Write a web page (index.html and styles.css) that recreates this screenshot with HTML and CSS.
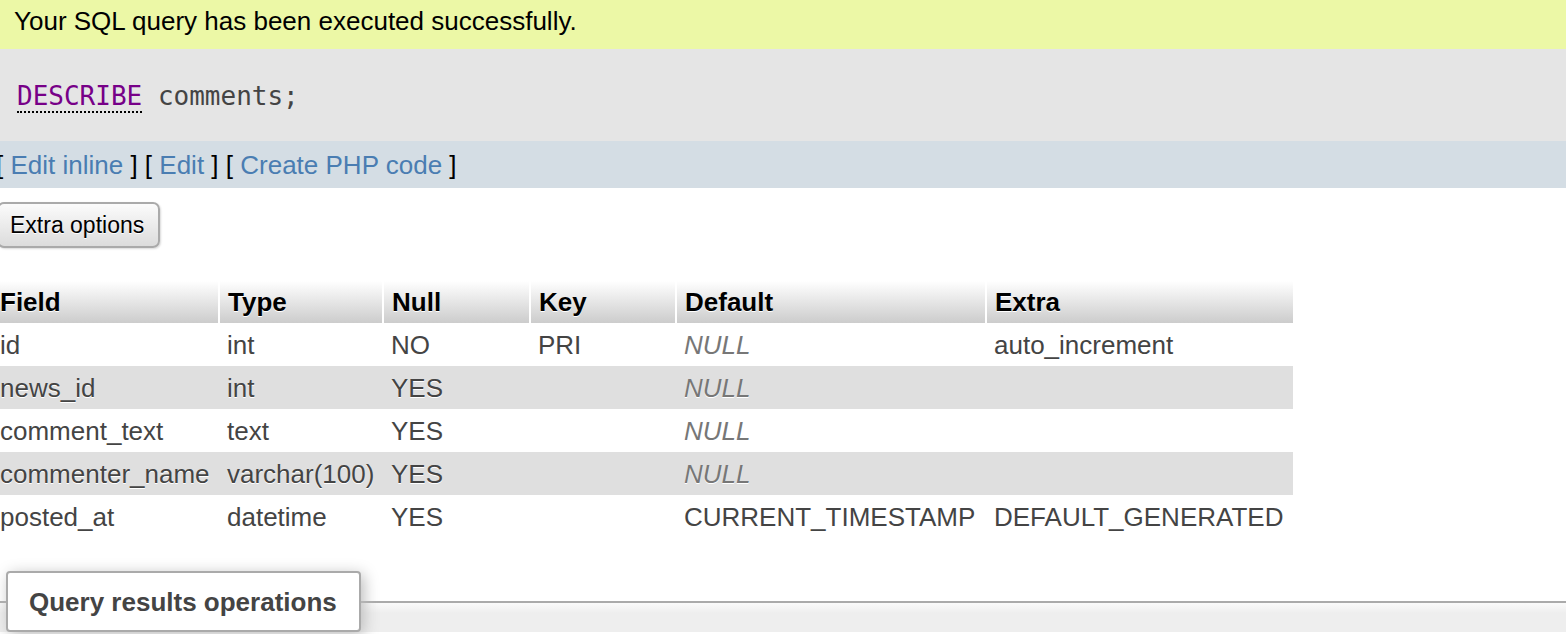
FILE: index.html
```html
<!DOCTYPE html>
<html lang="en">
<head>
<meta charset="utf-8">
<title>DESCRIBE comments</title>
<link rel="stylesheet" href="styles.css">
</head>
<body>
<div class="success">Your SQL query has been executed successfully.</div>
<div class="sql"><code><a class="kw" href="#">DESCRIBE</a> <span class="ident">comments;</span></code></div>
<div class="tools"><span class="tools-inner">[ <a href="#">Edit inline</a> ] [ <a href="#">Edit</a> ] [ <a href="#">Create PHP code</a> ]</span></div>
<div class="options"><button class="btn" type="button">Extra options</button></div>
<table class="data">
  <colgroup>
    <col class="c1"><col class="c2"><col class="c3"><col class="c4"><col class="c5"><col class="c6">
  </colgroup>
  <thead>
    <tr><th>Field</th><th>Type</th><th>Null</th><th>Key</th><th>Default</th><th>Extra</th></tr>
  </thead>
  <tbody>
    <tr><td>id</td><td>int</td><td>NO</td><td>PRI</td><td class="null">NULL</td><td>auto_increment</td></tr>
    <tr class="even"><td>news_id</td><td>int</td><td>YES</td><td></td><td class="null">NULL</td><td></td></tr>
    <tr><td>comment_text</td><td>text</td><td>YES</td><td></td><td class="null">NULL</td><td></td></tr>
    <tr class="even"><td>commenter_name</td><td>varchar(100)</td><td>YES</td><td></td><td class="null">NULL</td><td></td></tr>
    <tr><td>posted_at</td><td>datetime</td><td>YES</td><td></td><td>CURRENT_TIMESTAMP</td><td>DEFAULT_GENERATED</td></tr>
  </tbody>
</table>
<fieldset class="ops">
  <legend>Query results operations</legend>
</fieldset>
</body>
</html>
```
FILE: styles.css
```css
html, body {
  margin: 0;
  padding: 0;
  background: #fff;
  overflow: hidden;
}
body {
  font-family: "Liberation Sans", Arial, Helvetica, sans-serif;
  font-size: 26px;
  color: #000;
  height: 634px;
}
.success {
  height: 49px;
  box-sizing: border-box;
  background: #ecf8a6;
  padding: 6px 0 0 14px;
  line-height: 30px;
  color: #000;
}
.sql {
  height: 92px;
  background: #e5e5e5;
  display: flex;
  align-items: center;
  padding-left: 17px;
}
.sql code {
  font-family: "DejaVu Sans Mono", "Liberation Mono", monospace;
  font-size: 26px;
  color: #444;
  line-height: 30px;
  padding-top: 2px;
}
.kw {
  color: #770088;
  text-decoration: none;
  border-bottom: 2px dotted #000;
}
.tools {
  height: 47px;
  background: #d4dde4;
  display: flex;
  align-items: center;
  color: #000;
  white-space: nowrap;
}
.tools-inner {
  margin-left: -4px;
  line-height: 30px;
}
.tools a {
  color: #4a7db2;
  text-decoration: none;
}
.options {
  padding-top: 14px;
}
.btn {
  font-family: "Liberation Sans", Arial, Helvetica, sans-serif;
  font-size: 23px;
  color: #000;
  height: 46px;
  margin-left: -3px;
  padding: 0 14px 0 11px;
  border: 2px solid #aaa;
  border-radius: 7px;
  background: linear-gradient(#fbfbfb, #dcdcdc);
  text-shadow: 0 1px 0 #fff;
  box-shadow: 1px 1px 2px rgba(0,0,0,0.15);
}
.data {
  margin-top: 33px;
  margin-left: -8px;
  border-collapse: collapse;
  table-layout: fixed;
  width: 1301px;
  white-space: nowrap;
}
.c1 { width: 227px; }
.c2 { width: 164px; }
.c3 { width: 147px; }
.c4 { width: 146px; }
.c5 { width: 310px; }
.c6 { width: 307px; }
.data th {
  height: 42px;
  box-sizing: border-box;
  padding: 0 8px;
  text-align: left;
  font-weight: bold;
  color: #000;
  text-shadow: 0 1px 0 #fff;
  background: linear-gradient(#ffffff, #cccccc);
  border-right: 2px solid #fff;
  vertical-align: middle;
  line-height: 30px;
}
.data th:last-child {
  border-right: 0;
}
.data td {
  height: 43px;
  box-sizing: border-box;
  padding: 0 8px;
  color: #444;
  vertical-align: middle;
  line-height: 30px;
}
.data tr.even td {
  background: #dfdfdf;
  text-shadow: 0 1px 0 #fff;
}
.data td.null {
  font-style: italic;
  color: #777;
}
.ops {
  margin: 33px -10px 0 -10px;
  padding: 0 0 0 16px;
  border: 0;
  border-top: 2px solid #aaa;
  background: linear-gradient(#fafafa 0, #eeeeee 10px);
  min-width: 0;
}
.ops legend {
  font-weight: bold;
  color: #444;
  background: #fff;
  border: 2px solid #aaa;
  border-radius: 4px;
  padding: 14px 22px 13px 21px;
  line-height: 30px;
  box-shadow: 3px 3px 15px #bbb;
}
```
